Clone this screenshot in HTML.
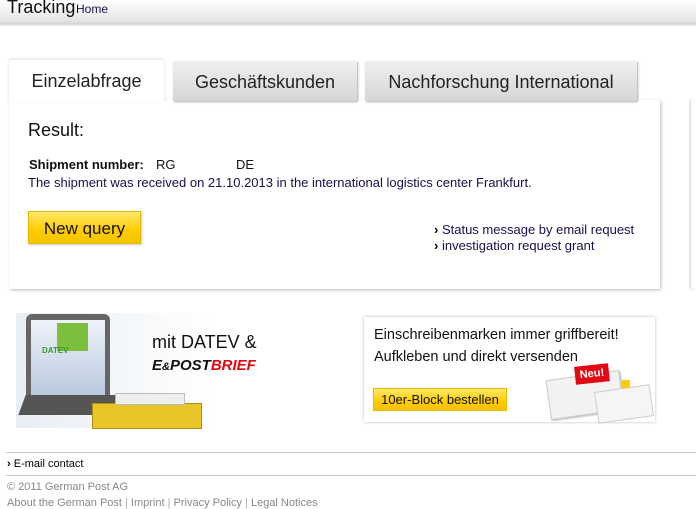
<!DOCTYPE html>
<html><head><meta charset="utf-8">
<style>
*{margin:0;padding:0;box-sizing:border-box}
body{width:696px;height:509px;overflow:hidden;background:#fff;font-family:"Liberation Sans",Arial,sans-serif;position:relative;color:#000}
.abs{position:absolute}
#hdr{left:0;top:0;width:696px;height:24px;background:linear-gradient(#fff,#e6e6e6 85%,#d4d4d4);box-shadow:0 1px 2px #ccc}
.tab{top:61px;height:40px;background:linear-gradient(#f0f0f0,#d6d6d6);box-shadow:1px 1px 2px #aaa;font-size:18px;color:#222;text-align:center;line-height:42px}
#t1{left:9px;top:60px;width:155px;height:42px;background:#fff;box-shadow:0 -1px 3px #ddd;z-index:2}
#panel{left:9px;top:100px;width:651px;height:189px;background:#fff;box-shadow:1px 1px 3px #bbb}
.ylw{background:linear-gradient(#ffe96a,#fc0 60%,#f5c400);border:1px solid #e8b800}
.nav{color:#1a0f4a}
</style></head><body>
<div id="hdr" class="abs"></div>
<div class="abs" style="left:7px;top:-3px;font-size:18px;color:#111">Tracking</div>
<div class="abs" style="left:76px;top:2px;font-size:12px;color:#1a0f4a">Home</div>

<div id="panel" class="abs"></div>
<div class="abs" style="left:691px;top:100px;width:5px;height:189px;background:#fff;box-shadow:-1px 0 2px #ccc"></div>
<div id="t1" class="abs tab">Einzelabfrage</div>
<div class="abs tab" style="left:173px;width:184px">Geschäftskunden</div>
<div class="abs tab" style="left:365px;width:272px">Nachforschung International</div>

<div class="abs" style="left:28px;top:120px;font-size:18px;color:#111">Result:</div>
<div class="abs" style="left:29px;top:157px;font-size:13px;font-weight:bold;color:#111">Shipment number:</div>
<div class="abs" style="left:156px;top:157px;font-size:13px;color:#111">RG</div>
<div class="abs" style="left:236px;top:157px;font-size:13px;color:#111">DE</div>
<div class="abs nav" style="left:28px;top:175px;font-size:13px">The shipment was received on 21.10.2013 in the international logistics center Frankfurt.</div>
<div class="abs ylw" style="left:28px;top:211px;width:113px;height:33px;font-size:17px;line-height:33px;text-align:center;color:#111;box-shadow:1px 1px 2px #ccc">New query</div>
<div class="abs nav" style="left:434px;top:222px;font-size:13px;line-height:16px"><b style="color:#000">›</b> Status message by email request<br><b style="color:#000">›</b> investigation request grant</div>

<!-- left banner -->
<div class="abs" style="left:16px;top:313px;width:200px;height:115px;background:linear-gradient(90deg,#e8eef4,#fff)"></div>
<div class="abs" style="left:26px;top:314px;width:84px;height:90px;background:#666;border-radius:6px"></div>
<div class="abs" style="left:31px;top:320px;width:74px;height:75px;background:linear-gradient(#eef3fa,#b9c9de)"></div>
<div class="abs" style="left:57px;top:323px;width:31px;height:28px;background:#7cbf3c"></div>
<div class="abs" style="left:42px;top:346px;font-size:8px;font-weight:bold;color:#3a9a2a">DATEV</div>
<div class="abs" style="left:22px;top:395px;width:120px;height:20px;background:#555;transform:skewX(-20deg)"></div>
<div class="abs" style="left:92px;top:403px;width:110px;height:26px;background:#e8c628;border:1px solid #b09010"></div>
<div class="abs" style="left:115px;top:393px;width:70px;height:12px;background:#eee;border:1px solid #bbb"></div>
<div class="abs" style="left:152px;top:332px;font-size:18px;color:#111">mit DATEV &amp;</div>
<div class="abs" style="left:152px;top:357px;font-size:15px;font-weight:bold;font-style:italic;color:#111">E<span style="font-size:11px">&amp;</span>POST<span style="color:#e30613">BRIEF</span></div>

<!-- right banner -->
<div class="abs" style="left:364px;top:317px;width:291px;height:105px;background:#fff;box-shadow:0 0 3px #bbb"></div>
<div class="abs" style="left:374px;top:324px;font-size:14.5px;line-height:22px;color:#111">Einschreibenmarken immer griffbereit!<br>Aufkleben und direkt versenden</div>
<div class="abs ylw" style="left:373px;top:388px;width:134px;height:23px;font-size:13px;line-height:22px;text-align:center;color:#111">10er-Block bestellen</div>
<div class="abs" style="left:548px;top:375px;width:74px;height:40px;background:#f2f2f2;border:1px solid #ccc;transform:rotate(-8deg);box-shadow:1px 1px 2px #aaa"></div>
<div class="abs" style="left:596px;top:388px;width:56px;height:32px;background:#f5f5f5;border:1px solid #ccc;transform:rotate(-8deg)"></div>
<div class="abs" style="left:575px;top:365px;width:34px;height:18px;background:#e30613;color:#fff;font-size:11px;font-weight:bold;text-align:center;line-height:18px;transform:rotate(-6deg)">Neu!</div>
<div class="abs" style="left:622px;top:380px;width:8px;height:8px;background:#fc0"></div>

<!-- footer -->
<div class="abs" style="left:6px;top:452px;width:690px;height:1px;background:#ccc"></div>
<div class="abs" style="left:7px;top:458px;font-size:11px;color:#000"><b>›</b> E-mail contact</div>
<div class="abs" style="left:6px;top:475px;width:690px;height:1px;background:#ccc"></div>
<div class="abs" style="left:7px;top:481px;font-size:11px;color:#888">© 2011 German Post AG</div>
<div class="abs" style="left:7px;top:497px;font-size:11px;color:#888">About the German Post <span style="color:#aaa">|</span> Imprint <span style="color:#aaa">|</span> Privacy Policy <span style="color:#aaa">|</span> Legal Notices</div>
</body></html>
